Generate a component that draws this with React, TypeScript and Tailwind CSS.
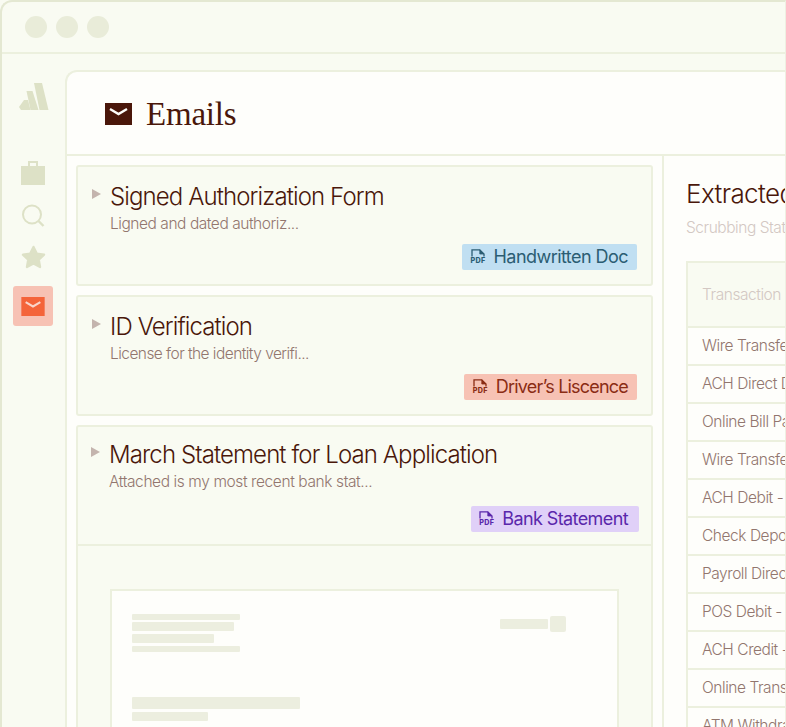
const sans = { fontFamily: "Inter, sans-serif" };

const PdfIcon = () => (
  <div className="flex h-[16px] w-[15px] shrink-0 flex-col">
    <svg viewBox="0 0 15 8" className="h-[8px] w-[15px]" fill="none">
      <path d="M1 7.5V0.8H8.8L13 5V7.5" stroke="currentColor" strokeWidth="1.3" />
      <path d="M8.8 0.8V5H13" fill="currentColor" stroke="currentColor" strokeWidth="0.8" />
    </svg>
    <span className="text-[7.2px] font-extrabold leading-[8px] tracking-[0.25px]">PDF</span>
  </div>
);

const Mail = ({ className, flap }: { className: string; flap: string }) => (
  <svg viewBox="0 0 27 22" className={className}>
    <rect width="27" height="22" fill="currentColor" />
    <path d="M5 6L13.5 11L22 6" fill="none" stroke={flap} strokeWidth="2.4" />
  </svg>
);

const Tag = ({ label, box, text }: { label: string; box: string; text: string }) => (
  <div className={`flex h-[26px] items-center gap-[8px] rounded-[2px] ${box} ${text}`}>
    <PdfIcon />
    <span className="text-[18px] leading-none">{label}</span>
  </div>
);

const Mailcard = ({
  title,
  sub,
  subTracking,
  children,
  className,
}: {
  title: string;
  sub: string;
  subTracking: string;
  children: React.ReactNode;
  className: string;
}) => (
  <div className={`rounded-[3px] border-2 border-[#ecf0de] bg-[#f9fbf2] ${className}`}>
    <div className="flex gap-[9px] pl-[14px] pt-[16px]">
      <div className="mt-[6px] h-0 w-0 border-y-[5px] border-l-[9px] border-y-transparent border-l-[#c4b4ae]" />
      <div>
        <div className="text-[24px] font-light leading-[28px] tracking-[-0.89px] text-[#4a170a]">{title}</div>
        <div className={`mt-[4px] text-[15.5px] font-light leading-[18px] text-[#92766e] ${subTracking}`}>{sub}</div>
      </div>
    </div>
    <div className="flex justify-end pr-[14px] pt-[11px]">{children}</div>
  </div>
);

const rows = [
  "Wire Transfer",
  "ACH Direct Deposit",
  "Online Bill Payment",
  "Wire Transfer",
  "ACH Debit - Utility",
  "Check Deposit",
  "Payroll Direct",
  "POS Debit - Grocery",
  "ACH Credit - Refund",
  "Online Transfer",
  "ATM Withdrawal",
];

export default function App() {
  return (
    <div className="h-[727px] w-[786px] overflow-hidden bg-[#f9fbf2]" style={sans}>
      <div className="h-[780px] w-[786px] rounded-tl-[12px] border-l-2 border-t-2 border-r border-[#e4e8d2] border-r-[#eef0e2]">
        {/* title bar */}
        <div className="flex h-[52px] items-center gap-[9px] border-b-2 border-[#ecf0de] pl-[23px]">
          <div className="size-[22px] rounded-full bg-[#e9ecd9]" />
          <div className="size-[22px] rounded-full bg-[#e9ecd9]" />
          <div className="size-[22px] rounded-full bg-[#e9ecd9]" />
        </div>

        <div className="flex">
          {/* sidebar */}
          <div className="flex w-[63px] shrink-0 flex-col items-center pr-[1px] pt-[29px] text-[#dde1c6]">
            <svg viewBox="0 0 30 27" className="ml-[1px] h-[27px] w-[30px]" fill="currentColor">
              <path d="M5 17H9L11.5 27H2L0 24Z" />
              <path d="M7.5 8H13.5L19.5 27H11.5Z" />
              <path d="M15 0H23L29.5 27H20.5Z" />
            </svg>
            <svg viewBox="0 0 24 24" className="mt-[51px] h-[24px] w-[24px]">
              <path d="M8 6V1H16V6" fill="none" stroke="currentColor" strokeWidth="2" />
              <rect y="5" width="24" height="19" fill="currentColor" />
            </svg>
            <svg viewBox="0 0 24 24" className="mt-[19px] size-[24px]" fill="none" stroke="currentColor" strokeWidth="2">
              <circle cx="11" cy="10.5" r="9" />
              <path d="M17.5 17L22.5 22" strokeWidth="2.4" />
            </svg>
            <svg viewBox="0 0 26 24" className="mt-[17px] h-[24px] w-[25px]" fill="currentColor">
              <path
                d="M13 1.5L16.4 8.4L24 9.6L18.5 14.9L19.8 22.4L13 18.8L6.2 22.4L7.5 14.9L2 9.6L9.6 8.4Z"
                stroke="currentColor"
                strokeWidth="2.4"
                strokeLinejoin="round"
              />
            </svg>
            <div className="mt-[17px] flex size-[40px] items-center justify-center rounded-[3px] bg-[#f7c2b4]">
              <Mail className="h-[19px] w-[24px] text-[#f4643a]" flap="#f9d5ca" />
            </div>
          </div>

          {/* main panel */}
          <div className="mt-[16px] min-w-0 flex-1 rounded-tl-[12px] border-l-2 border-t-2 border-[#ecf0de] bg-[#fefefb]">
            <div className="flex h-[84px] items-center gap-[14px] border-b-2 border-[#ecf0de] pl-[38px] pt-[2px]">
              <Mail className="h-[22px] w-[27px] text-[#4a170a]" flap="#fefefb" />
              <span className="text-[33px] leading-none tracking-[-0.2px] text-[#4a170a]" style={{ fontFamily: '"Liberation Serif", serif' }}>
                Emails
              </span>
            </div>

            <div className="flex">
              {/* left column */}
              <div className="flex w-[597px] shrink-0 flex-col gap-[9px] border-r-2 border-[#ecf0de] pl-[9px] pr-[9px] pt-[9px]">
                <Mailcard
                  title="Signed Authorization Form"
                  sub="Ligned and dated authoriz..."
                  subTracking="tracking-[-0.45px]"
                  className="h-[121px]"
                >
                  <Tag label="Handwritten Doc" box="bg-[#c0dff2] px-[9px]" text="text-[#2b5d73] tracking-[-0.55px]" />
                </Mailcard>
                <Mailcard
                  title="ID Verification"
                  sub="License for the identity verifi..."
                  subTracking="tracking-[-0.55px]"
                  className="h-[121px]"
                >
                  <Tag label="Driver’s Liscence" box="bg-[#f7c2b4] px-[9px]" text="text-[#8a2c14] tracking-[-0.8px]" />
                </Mailcard>
                <div className="rounded-t-[3px] border-2 border-[#ecf0de] bg-[#f9fbf2]">
                  <div className="h-[119px] border-b-2 border-[#ecf0de]">
                    <div className="flex gap-[9px] pl-[13px] pt-[14px]">
                      <div className="mt-[6px] h-0 w-0 border-y-[5px] border-l-[9px] border-y-transparent border-l-[#c4b4ae]" />
                      <div>
                        <div className="text-[24px] font-light leading-[28px] tracking-[-0.89px] text-[#4a170a]">
                          March Statement for Loan Application
                        </div>
                        <div className="mt-[4px] text-[15.5px] font-light leading-[18px] tracking-[-0.4px] text-[#92766e]">
                          Attached is my most recent bank stat...
                        </div>
                      </div>
                    </div>
                    <div className="flex justify-end pr-[12px] pt-[15px]">
                      <Tag label="Bank Statement" box="bg-[#e0d0f8] pl-[8px] pr-[11px]" text="text-[#5a27ab] tracking-[-0.6px]" />
                    </div>
                  </div>
                  {/* document preview */}
                  <div className="px-[32px] pt-[43px]">
                    <div className="h-[200px] w-[509px] border-2 border-[#ecf0de] bg-[#fefefb] pl-[20px] pr-[51px] pt-[23px]">
                      <div className="flex justify-between">
                        <div className="flex flex-col">
                          <div className="h-[6px] w-[108px] rounded-[1px] bg-[#eceedf]" />
                          <div className="mt-[2px] h-[9px] w-[102px] rounded-[1px] bg-[#eceedf]" />
                          <div className="mt-[3px] h-[9px] w-[82px] rounded-[1px] bg-[#eceedf]" />
                          <div className="mt-[3px] h-[6px] w-[108px] rounded-[1px] bg-[#eceedf]" />
                        </div>
                        <div className="mt-[2px] flex items-center gap-[2px] self-start">
                          <div className="h-[10px] w-[48px] rounded-[1px] bg-[#eceedf]" />
                          <div className="h-[16px] w-[16px] rounded-[2px] bg-[#eceedf]" />
                        </div>
                      </div>
                      <div className="mt-[45px] h-[12px] w-[168px] rounded-[1px] bg-[#eceedf]" />
                      <div className="mt-[3px] h-[9px] w-[76px] rounded-[1px] bg-[#eceedf]" />
                    </div>
                  </div>
                </div>
              </div>

              {/* right column */}
              <div className="min-w-0 flex-1 overflow-hidden pl-[22px] pt-[23px]">
                <div className="whitespace-nowrap text-[26px] font-light leading-[30px] tracking-[-0.6px] text-[#4a170a]">
                  Extracted Data
                </div>
                <div className="mt-[10px] whitespace-nowrap text-[15.5px] font-light leading-[18px] tracking-[-0.45px] text-[#d3c8c3]">
                  Scrubbing Status
                </div>
                <div className="mt-[24px] w-[300px] border-2 border-b-0 border-[#ecf0de]">
                  <div className="flex h-[65px] items-center whitespace-nowrap border-b-2 border-[#ecf0de] bg-[#f9fbf2] pl-[14px] text-[15.5px] font-light tracking-[-0.45px] text-[#d3c8c3]">
                    Transaction Type
                  </div>
                  {rows.map((r, i) => (
                    <div
                      key={i}
                      className="flex h-[38px] items-center whitespace-nowrap border-b-2 border-[#ecf0de] pl-[14px] text-[15.5px] font-light tracking-[-0.45px] text-[#92766e]"
                    >
                      {r}
                    </div>
                  ))}
                </div>
              </div>
            </div>
          </div>
        </div>
      </div>
    </div>
  );
}
